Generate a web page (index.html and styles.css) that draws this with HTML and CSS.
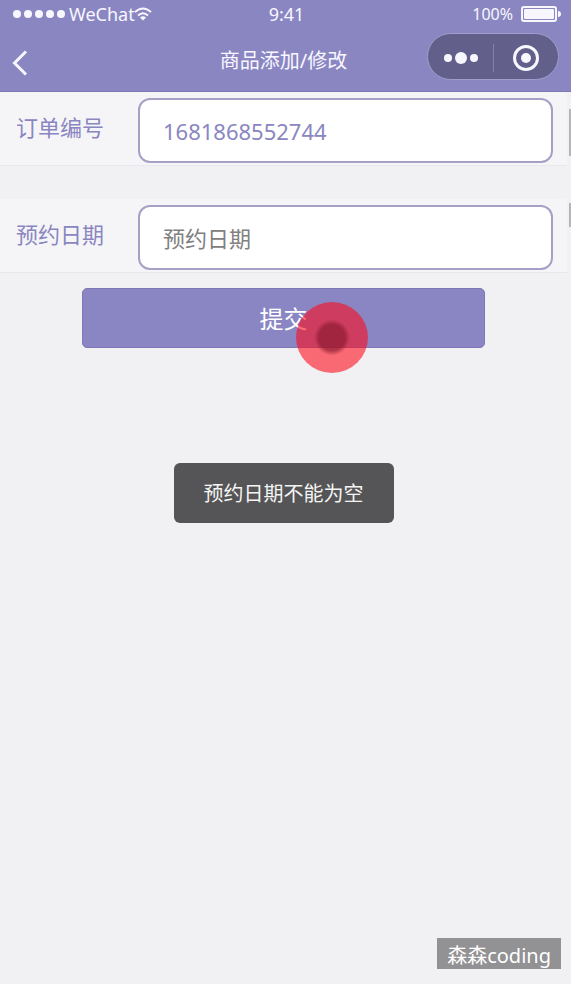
FILE: index.html
```html
<!DOCTYPE html>
<html lang="zh-CN">
<head>
<meta charset="utf-8">
<meta name="viewport" content="width=device-width, initial-scale=1">
<title>商品添加/修改</title>
<link rel="stylesheet" href="styles.css">
</head>
<body>
<header class="header">
  <div class="status">
    <div class="carrier">
      <svg class="signal" viewBox="0 0 54 10" aria-hidden="true"><circle cx="5" cy="5" r="4"/><circle cx="16" cy="5" r="4"/><circle cx="27" cy="5" r="4"/><circle cx="38" cy="5" r="4"/><circle cx="49" cy="5" r="4"/></svg>
      <span>WeChat</span>
      <svg class="wifi" viewBox="0 0 18 14" aria-hidden="true"><path d="M1 5Q9-2 17 5M4 8.500Q9 4 14 8.500"/><path class="wifi-dot" d="M6 10.500Q9 8 12 10.500L9 13.500Z"/></svg>
    </div>
    <span class="time">9:41</span>
    <div class="power">
      <span>100%</span>
      <svg class="battery" viewBox="0 0 40 16" aria-hidden="true"><rect class="battery-case" x="1" y="1" width="34" height="14" rx="2"/><rect x="3" y="3" width="30" height="10" rx="1"/><path d="M37 5q3 0 3 3t-3 3z"/></svg>
    </div>
  </div>
  <nav class="nav">
    <button class="back" type="button" aria-label="返回"><svg viewBox="0 0 16 26" aria-hidden="true"><path d="M14 1.500L2.500 13L14 24.500"/></svg></button>
    <h1 class="title">商品添加/修改</h1>
    <div class="capsule">
      <button type="button" aria-label="更多"><svg class="more" viewBox="0 0 36 14" aria-hidden="true"><circle cx="5" cy="7" r="4"/><circle cx="18" cy="7" r="6"/><circle cx="31" cy="7" r="4"/></svg></button>
      <button type="button" aria-label="关闭"><svg class="target" viewBox="0 0 28 28" aria-hidden="true"><circle class="ring" cx="14" cy="14" r="11.500"/><circle cx="14" cy="14" r="5"/></svg></button>
    </div>
  </nav>
</header>
<main class="page">
  <form class="form" novalidate>
    <div class="row">
      <label for="order">订单编号</label>
      <input id="order" type="text" value="1681868552744">
    </div>
    <div class="row">
      <label for="date">预约日期</label>
      <input id="date" type="text" placeholder="预约日期">
    </div>
    <div class="action">
      <button class="submit" type="button">提交</button>
      <span class="touch" aria-hidden="true"></span>
    </div>
  </form>
  <div class="toast" role="alert">预约日期不能为空</div>
</main>
<span class="edge edge-top" aria-hidden="true"></span>
<span class="edge edge-low" aria-hidden="true"></span>
<div class="watermark">森森coding</div>
</body>
</html>
```
FILE: styles.css
```css
* { box-sizing: border-box; }

body {
  margin: 0;
  min-height: 100vh;
  position: relative;
  background: #f1f0f3;
  color: #8a86c1;
  font-family: "Noto Sans", "Noto Sans CJK SC", sans-serif;
}

button {
  border: 0;
  padding: 0;
  background: none;
  color: inherit;
  font: inherit;
}

svg { display: block; fill: currentColor; }

.header {
  background: #8a86c1;
  border-bottom: 1px solid #7d79b3;
  color: #f8f7ff;
}

.status {
  display: grid;
  grid-template-columns: 1fr auto 1fr;
  align-items: center;
  height: 28px;
  padding: 0 10px 0 12px;
  font-size: 18px;
  line-height: 28px;
}

.carrier, .power { display: flex; align-items: center; }
.carrier { gap: 3px; }
.carrier .wifi { margin-left: -4px; }
.signal { width: 54px; height: 10px; }
.wifi { width: 18px; height: 14px; }
.wifi path { fill: none; stroke: currentColor; stroke-width: 2; }
.wifi .wifi-dot { fill: currentColor; stroke: none; }
.power { justify-content: flex-end; gap: 8px; font-size: 16px; }
.battery { width: 40px; height: 16px; }
.battery-case { fill: none; stroke: currentColor; stroke-width: 2; }

.nav {
  display: grid;
  grid-template-columns: 1fr auto 1fr;
  align-items: center;
  height: 63px;
  padding: 0 12px;
  margin-right: 4px;
}

.back { justify-self: start; padding-top: 6px; }
.back svg { width: 16px; height: 26px; fill: none; stroke: currentColor; stroke-width: 3; }
.title { margin: 0; padding-top: 2px; font-size: 20px; line-height: 30px; font-weight: 400; }

.capsule {
  justify-self: end;
  align-self: start;
  display: grid;
  grid-template-columns: 1fr 1fr;
  width: 132px;
  height: 47px;
  margin: 5px -4px 0 0;
  border: 1px solid #a19ecb;
  border-radius: 24px;
  background: #625f8b;
}

.capsule button { display: grid; place-items: center; margin: 10px 0; }
.capsule button + button { border-left: 1px solid #8481ab; }
.more { width: 36px; height: 14px; }
.target { width: 28px; height: 28px; }
.ring { fill: none; stroke: currentColor; stroke-width: 3; }

.page { padding-right: 4px; }
.form { display: grid; }

.row {
  display: grid;
  grid-template-columns: 122px 1fr;
  align-items: center;
  padding: 6px 14px 2px 16px;
  margin-bottom: 33px;
  background: #f5f5f8;
  border-bottom: 1px solid #e8e7eb;
}

.row:nth-child(2) { margin-bottom: 15px; }
.row label { padding-bottom: 8px; font-size: 22px; line-height: 30px; }

.row input {
  width: 100%;
  height: 65px;
  padding: 0 23px;
  border: 2px solid #a5a1c6;
  border-radius: 12px;
  background: #fff;
  color: #8a86c1;
  font: inherit;
  font-size: 22px;
  outline: 0;
}

.row input::placeholder { color: #808080; opacity: 1; }

.action { position: relative; margin: 0 82px; }

.submit {
  display: block;
  width: 100%;
  height: 60px;
  padding-bottom: 2px;
  border: 1px solid #8078b5;
  border-radius: 5px;
  background: #8a86c3;
  color: #fff;
  font-size: 24px;
}

.touch {
  position: absolute;
  top: 14px;
  left: 53%;
  width: 72px;
  height: 71px;
  border-radius: 50%;
  background: radial-gradient(circle, rgba(165, 20, 40, .85) 13px, rgba(255, 8, 24, .58) 18px);
}

.toast {
  width: fit-content;
  margin: 115px auto 0;
  padding: 16px 30px 14px;
  border-radius: 6px;
  background: #555456;
  color: #f4f4f4;
  font-size: 20px;
  line-height: 30px;
}

.edge { position: absolute; right: 0; width: 2px; background: #b5b4b8; }
.edge-top { top: 109px; height: 47px; }
.edge-low { top: 203px; height: 24px; }

.watermark {
  position: absolute;
  right: 10px;
  bottom: 15px;
  padding: 5px 10px 0;
  background: #929194;
  color: #fff;
  font-size: 20px;
  line-height: 26px;
}
```
